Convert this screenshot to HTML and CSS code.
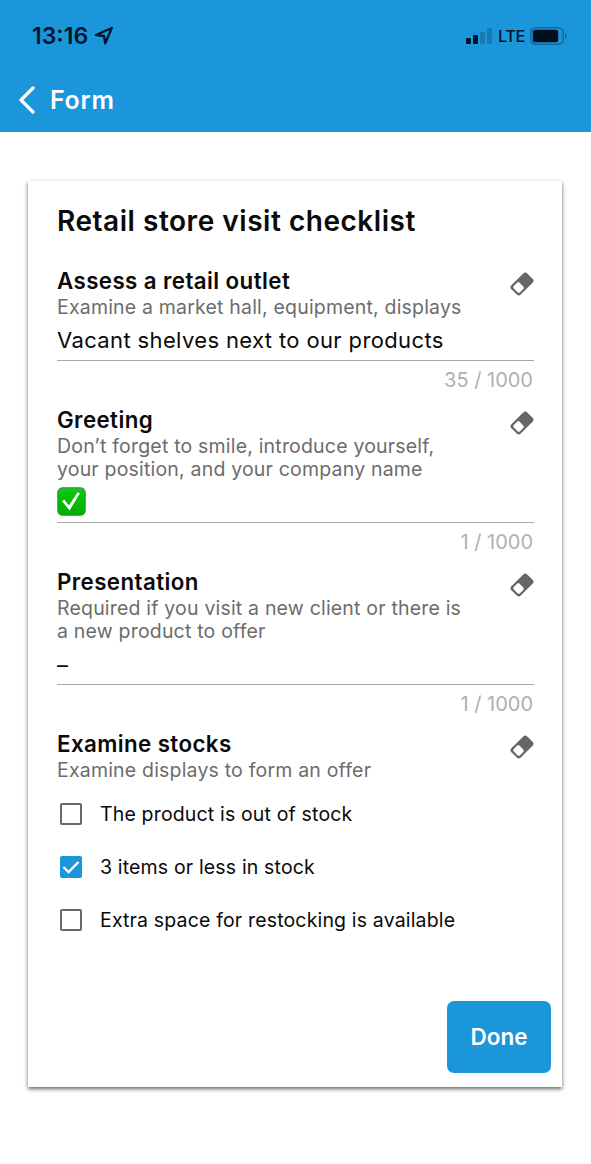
FILE: index.html
```html
<!DOCTYPE html>
<html lang="en">
<head>
	<meta charset="utf-8">
	<title>Form</title>
	<link rel="stylesheet" href="styles.css">
</head>
<body>
	<svg class="defs" width="0" height="0">
		<symbol id="eraser" viewBox="0 0 24 24">
			<g transform="rotate(-45 12 12)">
				<rect x=".8" y="5.4" width="22.4" height="13.2" rx="2.8" fill="#666"/>
				<rect x="3" y="7.6" width="8.2" height="8.8" rx="1.8" fill="#fff"/>
			</g>
		</symbol>
	</svg>
	<header>
		<div class="status">
			<span class="time">13:16</span>
			<svg class="location" width="20" height="20" viewBox="0 0 20 20"><path d="M17.8 2L2 9l8 1 1.2 7.3z" fill="none" stroke="#03152a" stroke-width="2.3" stroke-linejoin="round"/></svg>
			<svg class="signal" width="27" height="18" viewBox="0 0 27 18">
				<rect x="0" y="11" width="5" height="6" rx="1" fill="#03152a"/>
				<rect x="7" y="8" width="5" height="9" rx="1" fill="#03152a"/>
				<rect x="14" y="5" width="5" height="12" rx="1" fill="#167bb4"/>
				<rect x="21" y="1" width="5" height="16" rx="1" fill="#167bb4"/>
			</svg>
			<span class="network">LTE</span>
			<svg class="battery" width="38" height="18" viewBox="0 0 38 18">
				<rect x=".8" y=".8" width="32.4" height="16.4" rx="4.5" fill="none" stroke="#126a9c" stroke-width="1.5"/>
				<rect x="2.8" y="2.8" width="25.4" height="12.4" rx="2.5" fill="#02101e"/>
				<path d="M35 6.2c2.4.8 2.4 4.8 0 5.6z" fill="#126a9c"/>
			</svg>
		</div>
		<div class="nav">
			<svg width="18" height="28" viewBox="0 0 18 28"><path d="M15 2L3 14l12 12" fill="none" stroke="#fff" stroke-width="3.2" stroke-linecap="round" stroke-linejoin="round"/></svg>
			<span>Form</span>
		</div>
	</header>
	<main class="card">
		<h1>Retail store visit checklist</h1>
		<section class="field">
			<div class="head"><h2>Assess a retail outlet</h2><svg class="erase"><use href="#eraser"/></svg></div>
			<p class="hint">Examine a market hall, equipment, displays</p>
			<div class="value">Vacant shelves next to our products</div>
			<div class="count">35 / 1000</div>
		</section>
		<section class="field">
			<div class="head"><h2>Greeting</h2><svg class="erase"><use href="#eraser"/></svg></div>
			<p class="hint">Don’t forget to smile, introduce yourself,<br>your position, and your company name</p>
			<div class="value">
				<svg width="29" height="29" viewBox="0 0 29 29">
					<defs><linearGradient id="green" x1="0" y1="0" x2="0" y2="1"><stop offset="0" stop-color="#30bd35"/><stop offset=".2" stop-color="#08c50b"/><stop offset="1" stop-color="#00ac00"/></linearGradient></defs>
					<rect x=".8" y=".8" width="27.4" height="27.4" rx="4.5" fill="url(#green)" stroke="#159a19"/>
					<path d="M5 14.2l2.2-1.7 4.8 6.1L20.5 5.2l2.4 1L12.6 23.5z" fill="#fff"/>
				</svg>
			</div>
			<div class="count">1 / 1000</div>
		</section>
		<section class="field">
			<div class="head"><h2>Presentation</h2><svg class="erase"><use href="#eraser"/></svg></div>
			<p class="hint">Required if you visit a new client or there is<br>a new product to offer</p>
			<div class="value dash">–</div>
			<div class="count">1 / 1000</div>
		</section>
		<section class="field">
			<div class="head"><h2>Examine stocks</h2><svg class="erase"><use href="#eraser"/></svg></div>
			<p class="hint">Examine displays to form an offer</p>
			<div class="options">
				<label><span class="box"></span><span>The product is out of stock</span></label>
				<label><span class="box checked"><svg width="22" height="22" viewBox="0 0 22 22"><path d="M3.4 11l5.2 5.1L18.5 6" fill="none" stroke="#fff" stroke-width="2.3"/></svg></span><span>3 items or less in stock</span></label>
				<label><span class="box"></span><span>Extra space for restocking is available</span></label>
			</div>
		</section>
		<button>Done</button>
	</main>
</body>
</html>
```
FILE: styles.css
```css
* {box-sizing:border-box;}
html {height:100%;background:#fff;}
body {margin:0;min-height:1164px;background:#fff;font-family:Inter,"Liberation Sans",sans-serif;color:#0a0a0a;}
h1, h2, p {margin:0;font-weight:600;white-space:nowrap;}
svg {display:block;flex:none;}
.defs {display:none;}
header {height:132px;background:#1c96da;border-bottom:1px solid #2c8fc6;}
.status {display:flex;align-items:center;height:72px;padding:0 23px 0 32px;color:#03152a;}
.time {font-size:23px;font-weight:600;width:60px;white-space:nowrap;}
.location {margin-left:2px;}
.signal {margin-left:auto;}
.network {font-size:16.5px;font-weight:500;width:27px;margin:0 5px 0 5px;letter-spacing:-.5px;}
.nav {display:flex;align-items:center;gap:14px;height:56px;padding-left:18px;color:#fff;font-size:25px;font-weight:600;letter-spacing:.7px;}
.card {
	display:flex;
	flex-direction:column;
	width:534px;
	height:906px;
	margin:49px 0 0 28px;
	padding:22px 28px 14px 29px;
	background:#fff;
	box-shadow:0 2px 4px rgba(0,0,0,.6);
}
h1 {font-size:28px;line-height:36px;margin-bottom:29px;letter-spacing:.53px;}
.head {display:flex;justify-content:space-between;height:26px;margin-bottom:2px;}
h2 {font-size:22.3px;line-height:25px;letter-spacing:.42px;}
.erase {width:24px;height:24px;margin:4px 0 0 0;}
.hint {font-size:19.5px;line-height:23.5px;font-weight:400;color:#6c6c6c;letter-spacing:.19px;}
.value {display:flex;align-items:center;height:41.5px;font-size:22px;letter-spacing:.37px;border-bottom:1.5px solid #a8a8a8;}
.dash {padding-top:2px;}
.count {height:45.5px;padding:6.5px 1px 0 0;font-size:20px;line-height:24px;text-align:right;color:#b0b0b0;}
.options {padding:5.5px 0 0 3px;}
.options label {display:flex;align-items:center;gap:18px;height:53px;font-size:19.5px;letter-spacing:.16px;white-space:nowrap;}
.box {flex:none;width:22px;height:22px;border:2px solid #686868;border-radius:2px;}
.box.checked {border:0;background:#1c96da;}
button {
	align-self:flex-end;
	width:104px;
	height:72px;
	margin:auto -17px 0 0;
	padding:0 0 1px;
	border:0;
	border-radius:7px;
	background:#1c96da;
	color:#fff;
	font:600 22.5px Inter,"Liberation Sans",sans-serif;
}
```
